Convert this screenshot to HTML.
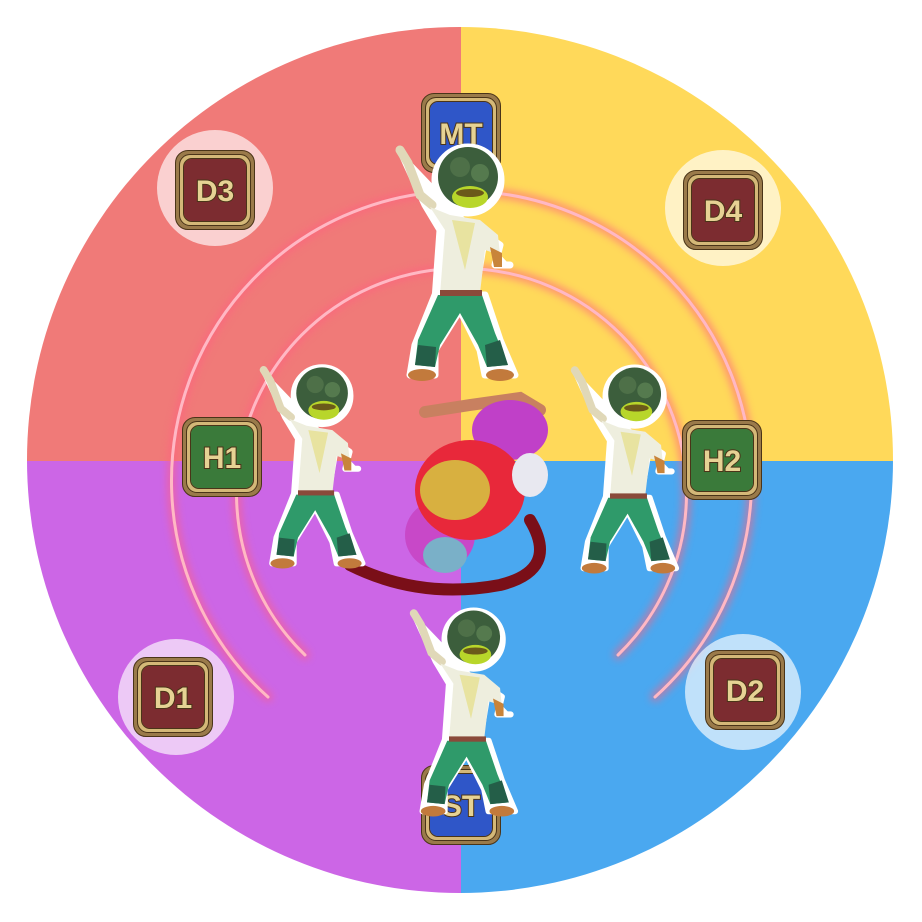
<!DOCTYPE html>
<html><head><style>html,body{margin:0;padding:0;background:#fff;width:922px;height:922px;overflow:hidden}</style></head>
<body>
<svg width="922" height="922" viewBox="0 0 922 922" xmlns="http://www.w3.org/2000/svg" font-family="Liberation Sans, sans-serif">
<defs>
<clipPath id="c"><circle cx="460" cy="460" r="433"/></clipPath>
<filter id="glow" x="-20%" y="-20%" width="140%" height="140%"><feGaussianBlur stdDeviation="4"/></filter>
<filter id="blur1"><feGaussianBlur stdDeviation="1"/></filter>
<g id="frog">
 <g stroke="#fff" stroke-width="7" stroke-linejoin="round" stroke-linecap="round">
  <path d="M10 15 L35 70 L50 95 L45 165 L85 160 L95 100 L110 110 L105 130 L120 130" fill="#fff"/>
  <path d="M45 160 L25 210 L20 240 L45 240 L45 215 L70 175 L90 215 L95 240 L125 240 L110 205 L95 160 Z" fill="#fff"/>
  <circle cx="78" cy="45" r="33" fill="#fff"/>
 </g>
 <path d="M10 15 L18 28 L30 60 L42 70" stroke="#e0d8b8" stroke-width="9" fill="none" stroke-linecap="round"/>
 <path d="M40 72 L55 95 L50 160 L90 158 L95 115 L110 120 L108 100 L90 85 L60 80 Z" fill="#eeeede"/>
 <path d="M62 85 L75 135 L85 88 Z" fill="#e8e3a0"/>
 <path d="M48 160 L28 205 L25 230 L45 232 L50 210 L70 178 L88 210 L97 232 L118 230 L105 198 L92 160 Z" fill="#2f9a6a"/>
 <path d="M28 210 L25 230 L45 232 L46 212 Z M95 210 L97 232 L118 230 L110 205 Z" fill="#245e48"/>
 <ellipse cx="32" cy="240" rx="14" ry="6" fill="#c27a3c"/>
 <ellipse cx="110" cy="240" rx="14" ry="6" fill="#c27a3c"/>
 <path d="M100 112 L112 118 L112 132 L104 132 Z" fill="#c8843a"/>
 <rect x="50" y="155" width="42" height="6" fill="#8a4a3a"/>
 <circle cx="78" cy="42" r="30" fill="#3c5e3c"/>
 <circle cx="70" cy="32" r="10" fill="#4e7048"/><circle cx="90" cy="38" r="9" fill="#557a4e"/>
 <ellipse cx="80" cy="62" rx="18" ry="11" fill="#b8d62a"/>
 <ellipse cx="80" cy="58" rx="14" ry="4" fill="#6b5a1a"/>
</g>
<g id="mk">
 <rect x="-39" y="-39" width="78" height="78" rx="12" fill="#9a7a4a"/>
 <rect x="-35" y="-35" width="70" height="70" rx="10" fill="#d4b878"/>
 <rect x="-31" y="-31" width="62" height="62" rx="8" fill="#8c6a3a"/>
</g>
</defs>
<g clip-path="url(#c)">
 <rect x="0" y="0" width="461" height="461" fill="#f07a78"/>
 <rect x="461" y="0" width="461" height="461" fill="#ffd95a"/>
 <rect x="0" y="461" width="461" height="461" fill="#cc66e6"/>
 <rect x="461" y="461" width="461" height="461" fill="#4aa8f0"/>
</g>
<g fill="none" stroke-linecap="round">
 <path d="M268 697 A 290 290 0 1 1 655 697" stroke="#ff6080" stroke-width="9" opacity=".6" filter="url(#glow)"/>
 <path d="M268 697 A 290 290 0 1 1 655 697" stroke="#ffb8c4" stroke-width="3"/>
 <path d="M305 655 A 225 225 0 1 1 618 655" stroke="#ff6080" stroke-width="9" opacity=".6" filter="url(#glow)"/>
 <path d="M305 655 A 225 225 0 1 1 618 655" stroke="#ffb8c4" stroke-width="3"/>
</g>
<g fill="#fff" opacity=".65">
 <circle cx="215" cy="188" r="58"/><circle cx="723" cy="208" r="58"/>
 <circle cx="176" cy="697" r="58"/><circle cx="743" cy="692" r="58"/>
</g>
<g font-weight="bold" font-size="30" text-anchor="middle" fill="#e6d294" stroke="#4a3418" stroke-width="2" paint-order="stroke">
 <g transform="translate(461,133)"><use href="#mk"/><rect x="-31" y="-31" width="62" height="62" rx="8" fill="#2f56c8" stroke="none"/><text y="11">MT</text></g>
 <g transform="translate(215,190)"><use href="#mk"/><rect x="-31" y="-31" width="62" height="62" rx="8" fill="#7c2c30" stroke="none"/><text y="11">D3</text></g>
 <g transform="translate(723,210)"><use href="#mk"/><rect x="-31" y="-31" width="62" height="62" rx="8" fill="#7c2c30" stroke="none"/><text y="11">D4</text></g>
 <g transform="translate(222,457)"><use href="#mk"/><rect x="-31" y="-31" width="62" height="62" rx="8" fill="#3a7a3a" stroke="none"/><text y="11">H1</text></g>
 <g transform="translate(722,460)"><use href="#mk"/><rect x="-31" y="-31" width="62" height="62" rx="8" fill="#3a7a3a" stroke="none"/><text y="11">H2</text></g>
 <g transform="translate(173,697)"><use href="#mk"/><rect x="-31" y="-31" width="62" height="62" rx="8" fill="#7c2c30" stroke="none"/><text y="11">D1</text></g>
 <g transform="translate(745,690)"><use href="#mk"/><rect x="-31" y="-31" width="62" height="62" rx="8" fill="#7c2c30" stroke="none"/><text y="11">D2</text></g>
 <g transform="translate(461,805)"><use href="#mk"/><rect x="-31" y="-31" width="62" height="62" rx="8" fill="#2f56c8" stroke="none"/><text y="11">ST</text></g>
</g>
<!-- boss -->
<g>
 <path d="M350 565 Q 420 600 500 585 Q 560 570 530 520" stroke="#7a0f18" stroke-width="12" fill="none" stroke-linecap="round"/>
 <path d="M425 412 L470 405 L520 398 L540 410" stroke="#c88060" stroke-width="12" fill="none" stroke-linecap="round"/>
 <ellipse cx="510" cy="430" rx="38" ry="30" fill="#c040c8"/>
 <ellipse cx="440" cy="535" rx="35" ry="35" fill="#c848c8"/>
 <ellipse cx="470" cy="490" rx="55" ry="50" fill="#e8283a"/>
 <ellipse cx="530" cy="475" rx="18" ry="22" fill="#e8e8f0"/>
 <ellipse cx="455" cy="490" rx="35" ry="30" fill="#d8b040"/>
 <ellipse cx="445" cy="555" rx="22" ry="18" fill="#7ab0c8"/>
</g>
<use href="#frog" transform="translate(390,135)"/>
<use href="#frog" transform="translate(255,357) scale(0.86)"/>
<use href="#frog" transform="translate(566,357) scale(0.88)"/>
<use href="#frog" transform="translate(405,600) scale(0.88)"/>
</svg>
</body></html>
